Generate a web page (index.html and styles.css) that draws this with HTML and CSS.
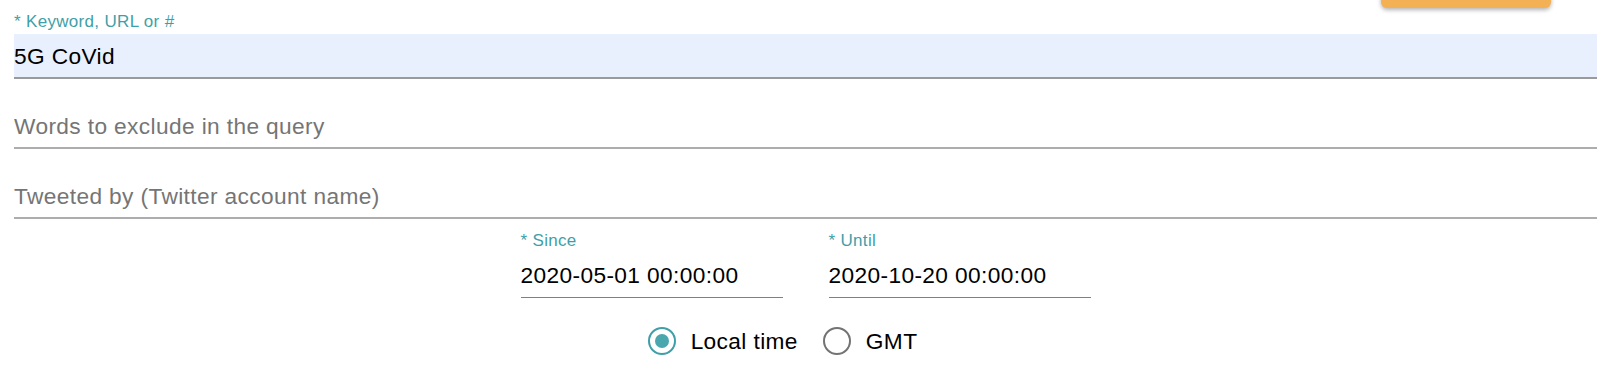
FILE: index.html
```html
<!DOCTYPE html>
<html lang="en">
<head>
    <meta charset="UTF-8">
    <meta name="viewport" content="width=device-width, initial-scale=1.0">
    <title>Twitter search</title>
    <link rel="stylesheet" href="styles.css">
</head>
<body>
    <div class="search-form">
        <div class="actions">
            <button class="submit-btn" type="button"></button>
        </div>

        <div class="field">
            <label class="field-label" for="keyword">* Keyword, URL or #</label>
            <input id="keyword" class="field-input filled" type="text" value="5G CoVid">
        </div>
        <div class="field">
            <span class="field-label"></span>
            <input class="field-input" type="text" placeholder="Words to exclude in the query">
        </div>
        <div class="field">
            <span class="field-label"></span>
            <input class="field-input" type="text" placeholder="Tweeted by (Twitter account name)">
        </div>

        <div class="date-row">
            <div class="field date-field">
                <label class="field-label" for="since">* Since</label>
                <input id="since" class="field-input date-input" type="text" value="2020-05-01 00:00:00">
            </div>
            <div class="field date-field">
                <label class="field-label" for="until">* Until</label>
                <input id="until" class="field-input date-input" type="text" value="2020-10-20 00:00:00">
            </div>
        </div>

        <div class="radio-row">
            <label class="radio">
                <span class="radio-circle checked"></span>
                <span>Local time</span>
            </label>
            <label class="radio">
                <span class="radio-circle"></span>
                <span>GMT</span>
            </label>
        </div>
    </div>
</body>
</html>
```

FILE: styles.css
```css
body {
    font-family: 'Liberation Sans', Arial, Helvetica, sans-serif;
    background-color: #fff;
    color: #000;
    margin: 0;
    padding: 0;
    overflow: hidden;
}
.search-form {
    padding: 0 3px 0 14px;
}
.actions {
    display: flex;
    justify-content: flex-end;
    height: 9px;
    padding-right: 46px;
}
.submit-btn {
    width: 170px;
    height: 48px;
    margin-top: -40px;
    border: none;
    border-radius: 6px;
    background-color: #f3b055;
    box-shadow: 0 2px 4px rgba(0, 0, 0, 0.3);
}
.field {
    display: flex;
    flex-direction: column;
}
.field-label {
    display: block;
    height: 25px;
    line-height: 25px;
    font-size: 17px;
    letter-spacing: 0.32px;
    color: #3f9fa8;
}
.field-input {
    display: block;
    width: 100%;
    height: 45px;
    box-sizing: border-box;
    padding: 9px 0 8px;
    border: none;
    border-bottom: 2px solid #adadad;
    outline: none;
    background: transparent;
    font-family: inherit;
    font-size: 22.7px;
    letter-spacing: 0.38px;
    line-height: 26px;
    color: #000;
}
.field-input::placeholder {
    color: #757575;
    opacity: 1;
}
.field-input.filled {
    background-color: #e8f0fe;
    border-bottom-color: #9a9a9a;
}
.date-row {
    display: flex;
    justify-content: center;
    gap: 46px;
    margin-top: 9px;
}
.date-field {
    width: 262px;
}
.date-input {
    padding-bottom: 9px;
    border-bottom: 1px solid #808080;
}
.radio-row {
    display: flex;
    justify-content: center;
    align-items: center;
    gap: 25px;
    height: 60px;
    margin-top: 13px;
    padding-right: 46px;
    font-size: 22.7px;
    letter-spacing: 0.38px;
}
.radio {
    display: flex;
    align-items: center;
    gap: 15px;
}
.radio-circle {
    width: 28px;
    height: 28px;
    box-sizing: border-box;
    border: 2.8px solid #737373;
    border-radius: 50%;
    display: flex;
    align-items: center;
    justify-content: center;
}
.radio-circle.checked {
    border-color: #3f9fa8;
}
.radio-circle.checked::after {
    content: '';
    width: 14px;
    height: 14px;
    border-radius: 50%;
    background-color: #4aa7ae;
}
```
